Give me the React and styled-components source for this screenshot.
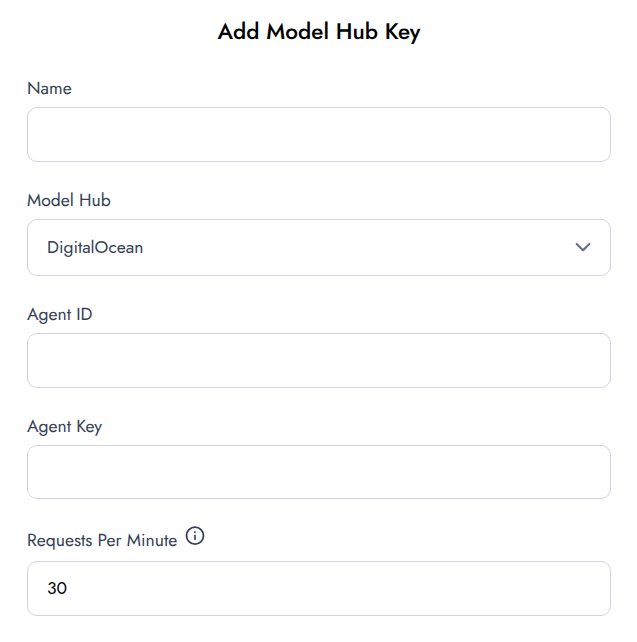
import React from "react";
import styled, { createGlobalStyle } from "styled-components";

const GlobalStyle = createGlobalStyle`
  * { box-sizing: border-box; }
  body {
    margin: 0;
    background: #fff;
    font-family: Jost, Lato, "Open Sans", sans-serif;
    -webkit-font-smoothing: antialiased;
    text-rendering: geometricPrecision;
  }
`;

const Form = styled.form`
  width: 637px;
  height: 642px;
  padding: 16px 26px 0 27px;
  overflow: hidden;
`;

const Title = styled.h1`
  margin: 0 0 31px;
  height: 32px;
  line-height: 32px;
  font-size: 22.5px;
  font-weight: 500;
  text-align: center;
  white-space: nowrap;
  color: #000;
`;

const Field = styled.div`
  display: flex;
  flex-direction: column;
  margin-bottom: ${(p) => p.$gap}px;
`;

const LabelRow = styled.div`
  display: flex;
  align-items: flex-start;
  height: 18px;
`;

const Label = styled.label`
  line-height: 18px;
  font-size: 17.5px;
  white-space: nowrap;
  color: #344054;
`;

const Input = styled.input`
  width: 100%;
  height: ${(p) => p.$height || 55}px;
  margin: ${(p) => p.$top || 10}px 0 0;
  padding: 0 19px 2px;
  border: 1px solid #d0d5dd;
  border-radius: 10px;
  outline: none;
  background: #fff;
  font-family: inherit;
  font-size: 17.5px;
  color: #000;
`;

const Select = styled.button`
  display: flex;
  align-items: center;
  justify-content: space-between;
  width: 100%;
  height: 57px;
  margin: 10px 0 0;
  padding: 0 19px 1px;
  border: 1px solid #d0d5dd;
  border-radius: 10px;
  background: #fff;
  font-family: inherit;
  font-size: 17.5px;
  color: #344054;
`;

const InfoIcon = styled.svg`
  flex: none;
  width: 20px;
  height: 20px;
  margin: -5px 0 0 8px;
`;

export default function App() {
  return (
    <>
      <GlobalStyle />
      <Form>
        <Title>Add Model Hub Key</Title>
        <Field $gap={29}>
          <LabelRow><Label htmlFor="name">Name</Label></LabelRow>
          <Input id="name" />
        </Field>
        <Field $gap={29}>
          <LabelRow><Label>Model Hub</Label></LabelRow>
          <Select type="button">
            <span>DigitalOcean</span>
            <svg width="16" height="10" viewBox="0 0 16 10" fill="none" stroke="#667085" strokeWidth="2.1" strokeLinecap="round" strokeLinejoin="round">
              <path d="M1.700 1.900 8 8.200l6.300-6.300" />
            </svg>
          </Select>
        </Field>
        <Field $gap={29}>
          <LabelRow><Label htmlFor="agent-id">Agent ID</Label></LabelRow>
          <Input id="agent-id" />
        </Field>
        <Field $gap={32}>
          <LabelRow><Label htmlFor="agent-key">Agent Key</Label></LabelRow>
          <Input id="agent-key" $height={54} />
        </Field>
        <Field $gap={0}>
          <LabelRow>
            <Label htmlFor="rpm">Requests Per Minute</Label>
            <InfoIcon viewBox="0 0 20 20" fill="none" stroke="#344054" strokeWidth="1.800">
              <circle cx="10" cy="9.700" r="8.500" />
              <path d="M10 8.700v5.300M10 5.300v1.700" strokeWidth="1.600" />
            </InfoIcon>
          </LabelRow>
          <Input id="rpm" defaultValue="30" $top={12} />
        </Field>
      </Form>
    </>
  );
}
